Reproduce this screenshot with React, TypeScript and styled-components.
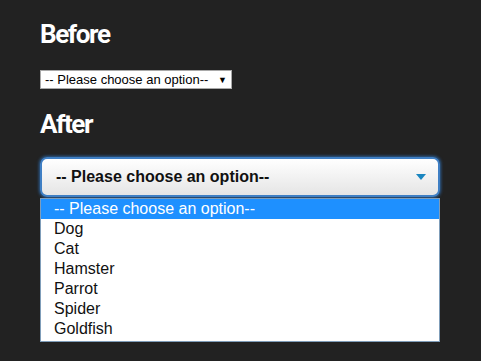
import styled, { createGlobalStyle } from "styled-components";

const options = ["Dog", "Cat", "Hamster", "Parrot", "Spider", "Goldfish"];
const placeholder = "-- Please choose an option--";

const App = () => {
  return (
    <>
      <GlobalStyle />
      <Page>
        <Heading>Before</Heading>
        <PlainSelect>
          <span>{placeholder}</span>
          <PlainArrow>▼</PlainArrow>
        </PlainSelect>
        <Heading>After</Heading>
        <Picker>
          <FancySelect>
            <span>{placeholder}</span>
            <svg width="10" height="6" viewBox="0 0 10 6">
              <path d="M0 0 L10 0 L5 6 Z" fill="#1b86c0" />
            </svg>
          </FancySelect>
          <List>
            <Option $active>{placeholder}</Option>
            {options.map((o) => (
              <Option key={o}>{o}</Option>
            ))}
          </List>
        </Picker>
      </Page>
    </>
  );
};

export default App;

const GlobalStyle = createGlobalStyle`
  html, body {
    margin: 0;
    padding: 0;
    background: #222222;
  }
`;

const Page = styled.div`
  width: 481px;
  height: 361px;
  box-sizing: border-box;
  padding: 19px 40px 0;
  background: #222222;
  font-family: "Liberation Sans", Arial, sans-serif;
`;

const Heading = styled.h2`
  margin: 0;
  height: 30px;
  font-family: Roboto, "Liberation Sans", sans-serif;
  font-weight: 700;
  font-size: 26px;
  line-height: 30px;
  letter-spacing: -1.4px;
  color: #ffffff;
`;

const PlainSelect = styled.div`
  box-sizing: border-box;
  width: 192px;
  height: 19px;
  margin: 21px 0 20px;
  padding: 0 4px;
  display: flex;
  align-items: center;
  justify-content: space-between;
  background: #ffffff;
  border: 1px solid #a9a9a9;
  font-size: 13px;
  color: #000000;
`;

const PlainArrow = styled.span`
  font-size: 9px;
`;

const Picker = styled.div`
  margin-top: 18px;
  width: 400px;
`;

const FancySelect = styled.div`
  box-sizing: border-box;
  height: 40px;
  padding: 0 12px 0 14px;
  display: flex;
  align-items: center;
  justify-content: space-between;
  border: 2px solid #3f7fc4;
  border-radius: 7px;
  box-shadow: 0 0 3px 1px #2c5f96;
  background: linear-gradient(#ffffff, #e5e5e5);
  font-size: 16px;
  font-weight: 700;
  color: #111111;
`;

const List = styled.div`
  box-sizing: border-box;
  margin-top: 1px;
  padding-bottom: 2px;
  border: 1px solid #7f9db9;
  background: #ffffff;
`;

const Option = styled.div<{ $active?: boolean }>`
  height: 20px;
  line-height: 20px;
  padding-left: 13px;
  font-size: 16px;
  color: ${(p) => (p.$active ? "#ffffff" : "#111111")};
  background: ${(p) => (p.$active ? "#1e90ff" : "transparent")};
`;
